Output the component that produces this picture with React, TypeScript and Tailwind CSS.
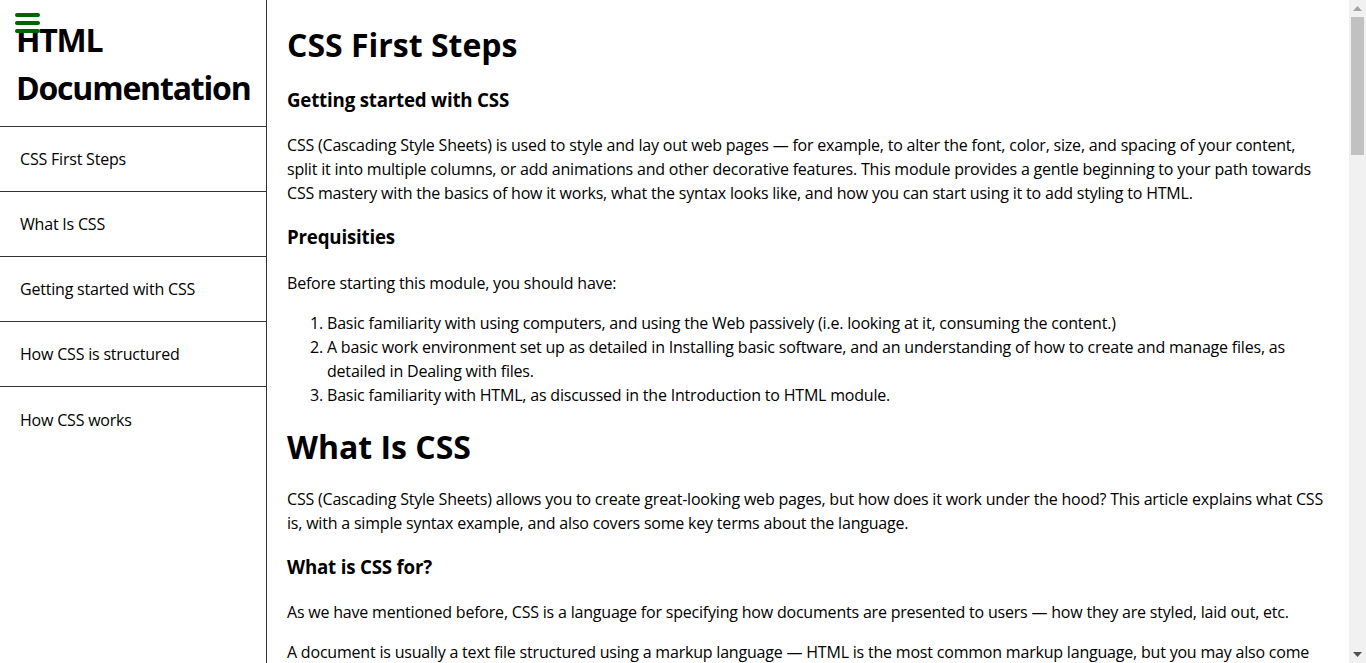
import React from "react";

const font = { fontFamily: '"Open Sans", "Noto Sans", sans-serif' };

const navItems = [
  "CSS First Steps",
  "What Is CSS",
  "Getting started with CSS",
  "How CSS is structured",
  "How CSS works",
];

function Hamburger() {
  return (
    <svg className="absolute left-[14px] top-[11px]" width="28" height="24" viewBox="0 0 28 24">
      <g stroke="#006400" strokeWidth="4" strokeLinecap="round">
        <line x1="3" y1="4" x2="24" y2="4" />
        <line x1="3" y1="12" x2="24" y2="12" />
        <line x1="3" y1="20" x2="24" y2="20" />
      </g>
    </svg>
  );
}

function Scrollbar() {
  return (
    <div className="fixed right-0 top-0 flex h-screen w-[17px] flex-col bg-[#f1f1f1]">
      <div className="flex h-[17px] items-center justify-center">
        <svg width="9" height="5" viewBox="0 0 9 5">
          <polygon points="0,5 9,5 4.5,0" fill="#a3a3a3" />
        </svg>
      </div>
      <div className="mx-[2px] h-[138px] bg-[#c1c1c1]" />
      <div className="flex-1" />
      <div className="flex h-[17px] items-center justify-center">
        <svg width="9" height="5" viewBox="0 0 9 5">
          <polygon points="0,0 9,0 4.5,5" fill="#505050" />
        </svg>
      </div>
    </div>
  );
}

const h1c = "text-[32px] font-bold leading-[48px] tracking-normal";
const h3c = "text-[18.72px] font-bold leading-[28px] tracking-[-0.2px]";

export default function App() {
  return (
    <div className="text-black" style={font}>
      <nav className="fixed left-0 top-0 h-screen w-[267px] border-r border-[#333] bg-white">
        <header className="relative border-b border-[#333] px-[16px] pt-[16px] pb-[14px]">
          <Hamburger />
          <h1 className="text-[32px] font-bold leading-[48px] tracking-[-1.2px]">HTML Documentation</h1>
        </header>
        <ul className="tracking-[-0.2px]">
          {navItems.map((item, i) => (
            <li
              key={item}
              className={
                i < navItems.length - 1
                  ? "flex h-[65px] items-center border-b border-[#333] pl-[20px] text-[16px]"
                  : "flex h-[65px] items-center pl-[20px] text-[16px]"
              }
            >
              {item}
            </li>
          ))}
        </ul>
      </nav>
      <main className="ml-[267px] mr-[17px] px-[20px] pb-[40px] text-[16px] leading-[24px] tracking-[-0.2px]">
        <section>
          <h1 className={"pt-[21px] " + h1c}>CSS First Steps</h1>
          <h3 className={"mt-[17px] " + h3c}>Getting started with CSS</h3>
          <p className="mt-[19px]">
            CSS (Cascading Style Sheets) is used to style and lay out web pages — for example, to alter the font, color, size, and spacing of your content, split it into multiple columns, or add animations and other decorative features. This module provides a gentle beginning to your path towards CSS mastery with the basics of how it works, what the syntax looks like, and how you can start using it to add styling to HTML.
          </p>
          <h3 className={"mt-[18px] " + h3c}>Prequisities</h3>
          <p className="mt-[20px]">Before starting this module, you should have:</p>
          <ol className="mt-[16px] list-decimal pl-[40px]">
            <li>Basic familiarity with using computers, and using the Web passively (i.e. looking at it, consuming the content.)</li>
            <li>A basic work environment set up as detailed in Installing basic software, and an understanding of how to create and manage files, as detailed in Dealing with files.</li>
            <li>Basic familiarity with HTML, as discussed in the Introduction to HTML module.</li>
          </ol>
        </section>
        <section>
          <h1 className={"mt-[16px] " + h1c}>What Is CSS</h1>
          <p className="mt-[16px]">
            CSS (Cascading Style Sheets) allows you to create great-looking web pages, but how does it work under the hood? This article explains what CSS is, with a simple syntax example, and also covers some key terms about the language.
          </p>
          <h3 className={"mt-[18px] " + h3c}>What is CSS for?</h3>
          <p className="mt-[19px]">
            As we have mentioned before, CSS is a language for specifying how documents are presented to users — how they are styled, laid out, etc.
          </p>
          <p className="mt-[16px]">
            A document is usually a text file structured using a markup language — HTML is the most common markup language, but you may also come across other markup languages such as SVG or XML.
          </p>
          <p className="mt-[16px]">
            Presenting a document to a user means converting it into a form usable by your audience. Browsers, like Firefox, Chrome, or Edge, are designed to present documents visually, for example, on a computer screen, projector, or printer.
          </p>
          <h3 className={"mt-[18px] " + h3c}>CSS syntax</h3>
          <p className="mt-[19px]">
            CSS is a rule-based language — you define the rules by specifying groups of styles that should be applied to particular elements or groups of elements on your web page.
          </p>
        </section>
        <section>
          <h1 className={"mt-[16px] " + h1c}>Getting started with CSS</h1>
          <p className="mt-[16px]">
            In this article, we will take a simple HTML document and apply CSS to it, learning some practical things about the language along the way.
          </p>
        </section>
        <section>
          <h1 className={"mt-[16px] " + h1c}>How CSS is structured</h1>
          <p className="mt-[16px]">
            Now that you have an idea about what CSS is and the basics of using it, it is time to look a little deeper into the structure of the language itself.
          </p>
        </section>
        <section>
          <h1 className={"mt-[16px] " + h1c}>How CSS works</h1>
          <p className="mt-[16px]">
            We have learned the basics of CSS, what it is for and how to write simple stylesheets. In this lesson we will take a look at how a browser takes CSS and HTML and turns that into a webpage.
          </p>
        </section>
      </main>
      <Scrollbar />
    </div>
  );
}
